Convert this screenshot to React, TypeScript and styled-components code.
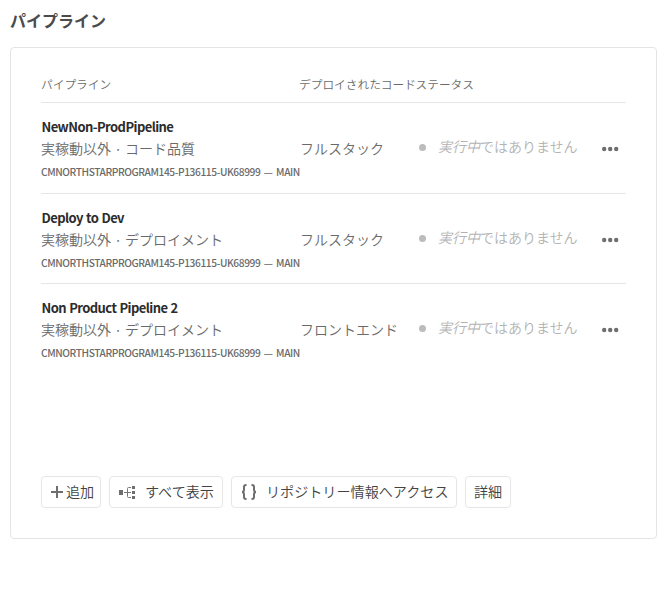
import React from 'react';
import styled, { createGlobalStyle } from 'styled-components';

const Global = createGlobalStyle`
  * { box-sizing: border-box; }
  body { margin: 0; background: #fff; color: #6a6a6a; font-family: "Noto Sans CJK JP", sans-serif; font-size: 14px; font-weight: 350; }
`;

const Page = styled.main`
  padding: 9px 5px 0 10px;
`;
const Title = styled.h1`
  margin: 0 0 16px;
  height: 22px;
  line-height: 22px;
  font-size: 16px;
  font-weight: 700;
  color: #4b4b4b;
  white-space: nowrap;
`;
const Card = styled.section`
  display: flex;
  flex-direction: column;
  height: 492px;
  padding: 20px 30px 30px;
  border: 1px solid #e4e4e4;
  border-radius: 4px;
`;
const Header = styled.div`
  display: grid;
  grid-template-columns: 258px 116.5px 1fr;
  height: 35px;
  padding-top: 7px;
  border-bottom: 1px solid #e6e6e6;
  font-size: 11.7px;
  line-height: 18px;
  white-space: nowrap;
`;
const Row = styled.div<{ $height: number; $last?: boolean }>`
  display: grid;
  grid-template-columns: 258px 120px 1fr 25px;
  height: ${p => p.$height}px;
  padding-top: 14px;
  border-bottom: 1px solid ${p => (p.$last ? 'transparent' : '#e6e6e6')};
  white-space: nowrap;
`;
const Name = styled.div`
  height: 20px;
  line-height: 20px;
  font-size: 13px;
  font-weight: 700;
  letter-spacing: -0.57px;
  word-spacing: 0.8px;
  padding-left: 0.5px;
  color: #2c2c2c;
`;
const Kind = styled.div`
  height: 24px;
  line-height: 23px;
`;
const Separator = styled.span`
  vertical-align: -1px;
  line-height: 1;
`;
const Branch = styled.div`
  height: 22px;
  line-height: 22px;
  font-size: 10.2px;
  font-weight: 500;
  letter-spacing: -0.4px;
  word-spacing: 1.6px;
`;
const Code = styled.div`
  padding: 19px 0 0 1px;
  line-height: 24px;
`;
const Status = styled.div`
  display: flex;
  align-items: center;
  height: 24px;
  margin-top: 17px;
  gap: 11px;
  color: #b3b3b3;
`;
const Dot = styled.span`
  width: 7px;
  height: 7px;
  margin-top: 2px;
  border-radius: 50%;
  background: #bcbcbc;
`;
const StatusText = styled.span`
  margin-left: 1px;
`;
const More = styled.button`
  display: flex;
  height: 20px;
  margin-top: 22px;
  padding: 0;
  border: 0;
  background: none;
  color: #6e6e6e;
`;
const Actions = styled.footer`
  display: flex;
  gap: 8px;
  margin-top: auto;
`;
const Button = styled.button<{ $width: number; $gap?: number }>`
  display: flex;
  align-items: center;
  gap: ${p => p.$gap ?? 0}px;
  width: ${p => p.$width}px;
  height: 32px;
  padding: 0 0 2px 8px;
  border: 1px solid #e6e6e6;
  border-radius: 4px;
  background: #fff;
  color: #434343;
  font: 350 14.1px/20px "Noto Sans CJK JP", sans-serif;
  white-space: nowrap;

  svg { margin-top: 1px; }
`;

const MoreIcon = () => (
  <svg width="18" height="20" fill="currentColor">
    <circle cx="3.2" cy="10" r="2.2" />
    <circle cx="9.2" cy="10" r="2.2" />
    <circle cx="15.2" cy="10" r="2.2" />
  </svg>
);
const AddIcon = () => (
  <svg width="16" height="18" fill="#6e6e6e">
    <path d="M1 8h5V3h2v5h5v2H8v5H6v-5H1z" />
  </svg>
);
const TreeIcon = () => (
  <svg width="18" height="18">
    <path fill="#6e6e6e" d="M1 7h4v5H1zM14 3h3v3h-3zM14 8h3v3h-3zM14 13h3v3h-3z" />
    <path fill="none" stroke="#777" d="M6 9.500h7M13 4.500h-2.500q-1 0-1 1v8q0 1 1 1H13" />
  </svg>
);
const BracesIcon = () => (
  <svg width="18" height="18" fill="none" stroke="#6e6e6e" strokeWidth="2">
    <path d="M6.500 2H6C4.500 2 4 2.600 4 4v2.500C4 8.100 3.300 9 2 9c1.300 0 2 .9 2 2.500V14c0 1.400.5 2 2 2h.5" />
    <path d="M11.500 2h.5c1.500 0 2 .6 2 2v2.500c0 1.600.7 2.500 2 2.500-1.300 0-2 .9-2 2.500V14c0 1.400-.5 2-2 2h-.5" />
  </svg>
);

const pipelines = [
  { name: 'NewNon-ProdPipeline', kind: 'コード品質', code: 'フルスタック', height: 91 },
  { name: 'Deploy to Dev', kind: 'デプロイメント', code: 'フルスタック', height: 90 },
  { name: 'Non Product Pipeline 2', kind: 'デプロイメント', code: 'フロントエンド', height: 90 },
];

export default function App() {
  return (
    <Page>
      <Global />
      <Title>パイプライン</Title>
      <Card>
        <Header>
          <span>パイプライン</span>
          <span>デプロイされたコード</span>
          <span>ステータス</span>
        </Header>
        {pipelines.map((p, i) => (
          <Row key={p.name} $height={p.height} $last={i === pipelines.length - 1}>
            <div>
              <Name>{p.name}</Name>
              <Kind>実稼動以外 <Separator>·</Separator> {p.kind}</Kind>
              <Branch>CMNORTHSTARPROGRAM145-P136115-UK68999 — MAIN</Branch>
            </div>
            <Code>{p.code}</Code>
            <Status>
              <Dot />
              <StatusText><em>実行中</em>ではありません</StatusText>
            </Status>
            <More aria-label="その他"><MoreIcon /></More>
          </Row>
        ))}
        <Actions>
          <Button $width={60}><AddIcon />追加</Button>
          <Button $width={114} $gap={9}><TreeIcon />すべて表示</Button>
          <Button $width={226} $gap={8}><BracesIcon />リポジトリー情報へアクセス</Button>
          <Button $width={46}>詳細</Button>
        </Actions>
      </Card>
    </Page>
  );
}
